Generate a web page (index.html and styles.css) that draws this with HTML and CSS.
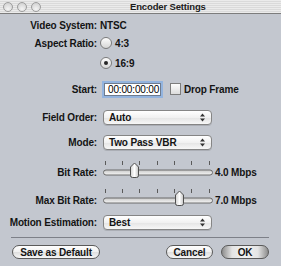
FILE: index.html
```html
<!DOCTYPE html>
<html lang="en">
<head>
    <meta charset="UTF-8">
    <title>Encoder Settings</title>
    <link rel="stylesheet" href="styles.css">
</head>
<body>
    <div class="window">
        <div class="titlebar">
            <span class="lights"><i></i><i></i><i></i></span>
            <span class="title">Encoder Settings</span>
        </div>

        <div class="form">
            <span class="label">Video System:</span>
            <span class="ctl"><span class="plain">NTSC</span></span>

            <span class="label">Aspect Ratio:</span>
            <span class="ctl"><span class="radio"></span>4:3</span>

            <span class="label"></span>
            <span class="ctl"><span class="radio on"></span>16:9</span>

            <span class="label">Start:</span>
            <span class="ctl">
                <span class="field">00:00:00:00</span>
                <span class="check"></span>Drop Frame
            </span>

            <span class="label">Field Order:</span>
            <span class="ctl"><span class="popup">Auto<svg class="arrows" width="5" height="9" viewBox="0 0 5 9"><path d="M0 3.5 L2.5 0.5 L5 3.5 Z M0 5.5 L2.5 8.5 L5 5.5 Z"/></svg></span></span>

            <span class="label">Mode:</span>
            <span class="ctl"><span class="popup">Two Pass VBR<svg class="arrows" width="5" height="9" viewBox="0 0 5 9"><path d="M0 3.5 L2.5 0.5 L5 3.5 Z M0 5.5 L2.5 8.5 L5 5.5 Z"/></svg></span></span>

            <!-- sliders -->
            <span class="label slide">Bit Rate:</span>
            <span class="ctl">
                <svg class="slider" width="110" height="20" viewBox="0 0 110 20">
                    <g stroke="#5a5a5a" stroke-width="1">
                        <path d="M2.5 2V6 M19.5 2V6 M36.5 2V6 M54.5 2V6 M71.5 2V6 M88.5 2V6 M106.5 2V6"/>
                    </g>
                    <rect x="0.5" y="11" width="109" height="5" rx="2.5" fill="url(#trk)" stroke="#6a6a6a"/>
                    <path d="M27.5 8 L31.5 4 L35.5 8 V16.5 Q35.5 18.5 33.5 18.5 H29.5 Q27.5 18.5 27.5 16.5 Z" fill="url(#thm)" stroke="#4f4f4f"/>
                    <defs>
                        <linearGradient id="trk" x1="0" y1="0" x2="0" y2="1"><stop offset="0" stop-color="#c9c9c9"/><stop offset="1" stop-color="#f6f6f6"/></linearGradient>
                        <linearGradient id="thm" x1="0" y1="0" x2="1" y2="0"><stop offset="0" stop-color="#d2d2d2"/><stop offset=".5" stop-color="#ffffff"/><stop offset="1" stop-color="#c4c4c4"/></linearGradient>
                    </defs>
                </svg>
                <span class="rate">4.0 Mbps</span>
            </span>

            <span class="label slide">Max Bit Rate:</span>
            <span class="ctl">
                <svg class="slider" width="110" height="20" viewBox="0 0 110 20">
                    <g stroke="#5a5a5a" stroke-width="1">
                        <path d="M2.5 2V6 M19.5 2V6 M36.5 2V6 M54.5 2V6 M71.5 2V6 M88.5 2V6 M106.5 2V6"/>
                    </g>
                    <rect x="0.5" y="11" width="109" height="5" rx="2.5" fill="url(#trk)" stroke="#6a6a6a"/>
                    <path d="M72.5 8 L76.5 4 L80.5 8 V16.5 Q80.5 18.5 78.5 18.5 H74.5 Q72.5 18.5 72.5 16.5 Z" fill="url(#thm)" stroke="#4f4f4f"/>
                </svg>
                <span class="rate">7.0 Mbps</span>
            </span>

            <span class="label">Motion Estimation:</span>
            <span class="ctl"><span class="popup">Best<svg class="arrows" width="5" height="9" viewBox="0 0 5 9"><path d="M0 3.5 L2.5 0.5 L5 3.5 Z M0 5.5 L2.5 8.5 L5 5.5 Z"/></svg></span></span>
        </div>

        <div class="sep"></div>

        <div class="buttons">
            <span class="btn btn-save">Save as Default</span>
            <span class="right">
                <span class="btn btn-cancel">Cancel</span>
                <span class="btn btn-ok">OK</span>
            </span>
        </div>
    </div>
</body>
</html>
```

FILE: styles.css
```css
* {
    box-sizing: border-box;
}
body {
    margin: 0;
    font-family: "Liberation Sans", Arial, sans-serif;
    font-size: 10px;
    font-weight: bold;
    letter-spacing: -0.15px;
    color: #141414;
}
.window {
    width: 281px;
    height: 266px;
    background: #c3c7cf;
    overflow: hidden;
}

/* title bar */
.titlebar {
    height: 14px;
    display: flex;
    align-items: center;
    padding-left: 3px;
    border-bottom: 1px solid #7c7c7c;
    background: repeating-linear-gradient(to bottom, #ebebeb 0, #ebebeb 1px, #dadada 1px, #dadada 2px);
}
.lights {
    display: flex;
    gap: 4px;
}
.lights i {
    width: 10px;
    height: 10px;
    border-radius: 50%;
    border: 1px solid #9d9d9d;
    background: radial-gradient(circle at 50% 75%, #f4f4f4, #cbcbcb);
}
.title {
    margin-left: 89px;
    font-size: 9.5px;
    color: #1c1c1c;
}

/* form */
.form {
    display: grid;
    grid-template-columns: 97px 1fr;
    grid-template-rows: 18px 18px 22px 30px 27px 23px 29px 28px 23px;
    column-gap: 3px;
    align-items: center;
    padding-top: 2px;
}
.label {
    text-align: right;
}
.label.slide {
    padding-top: 7px;
}
.ctl {
    display: flex;
    align-items: center;
}
.radio {
    width: 12px;
    height: 12px;
    margin-right: 3px;
    border-radius: 50%;
    border: 1px solid #7b7b7b;
    background: linear-gradient(#fdfdfd, #d6d6d6);
    display: flex;
    align-items: center;
    justify-content: center;
}
.radio.on::after {
    content: "";
    width: 4px;
    height: 4px;
    border-radius: 50%;
    background: #262626;
}
.field {
    width: 57px;
    height: 13px;
    margin-left: 4px;
    padding-left: 3px;
    border: 1px solid #6e7b8e;
    background: #fff;
    box-shadow: 0 0 0 2px #93b4df;
    font-weight: normal;
    line-height: 11px;
    color: #000;
}
.check {
    width: 11px;
    height: 12px;
    margin-left: 9px;
    margin-right: 3px;
    border: 1px solid #7d7d7d;
    background: linear-gradient(#fdfdfd, #dcdcdc);
}
.popup {
    width: 109px;
    height: 15px;
    margin-left: 3px;
    padding: 0 6px 0 5px;
    display: flex;
    align-items: center;
    justify-content: space-between;
    border: 1px solid #858585;
    border-radius: 4px;
    background: linear-gradient(#ffffff, #f1f1f1 50%, #e4e4e4 51%, #f7f7f7);
    box-shadow: 0 1px 0 rgba(0, 0, 0, 0.12);
}
.arrows {
    fill: #333;
}
.slider {
    margin-left: 3px;
    display: block;
}
.rate {
    margin-left: 2px;
    padding-top: 7px;
}

/* footer */
.sep {
    height: 1px;
    margin: 3px 12px 0 11px;
    background: #7d8088;
}
.buttons {
    display: flex;
    justify-content: space-between;
    padding: 0 12px;
    margin-top: 7px;
}
.right {
    display: flex;
    gap: 8px;
}
.btn {
    height: 14px;
    display: flex;
    align-items: center;
    justify-content: center;
    border: 1px solid #5a5a5a;
    border-radius: 7px;
    background: linear-gradient(#ffffff, #f0f0f0 50%, #dedede 51%, #f6f6f6);
}
.btn-save {
    width: 88px;
}
.btn-cancel {
    width: 47px;
}
.btn-ok {
    width: 48px;
    background: linear-gradient(to right, #8d8d8d, #e4e4e4 22%, #f2f2f2 50%, #e4e4e4 78%, #8d8d8d);
}
```
